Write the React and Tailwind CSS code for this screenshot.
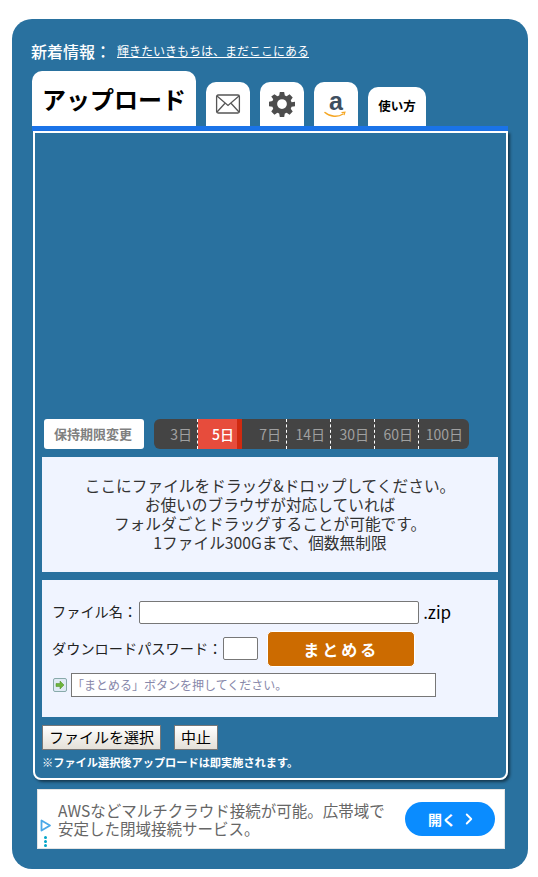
import { ChevronRight } from 'lucide-react';

const days = [
    { label: '3日', w: 'w-[44px]' },
    { label: '5日', w: 'w-[44px]', active: true },
    { label: '7日', w: 'w-[45px]' },
    { label: '14日', w: 'w-[44px]' },
    { label: '30日', w: 'w-[44px]' },
    { label: '60日', w: 'w-[44px]' },
    { label: '100日', w: 'flex-1', last: true },
];

function MailIcon() {
    return (
        <svg width="26" height="20" viewBox="0 0 26 20" fill="none" stroke="#555" strokeWidth="1.3">
            <rect x="1.6" y="1" width="22.8" height="18" rx="1.5" />
            <path d="M2 2l11 9.5L24 2M2 18l8-8.8M24 18l-8-8.8" />
        </svg>
    );
}

function GearIcon() {
    return (
        <svg width="26" height="26" viewBox="0 0 24 24" fill="#4d4d4d">
            <path fillRule="evenodd" d="M10 1h4l.6 3.1 1.7.7L19 3l2.900 2.900-1.800 2.700.7 1.700L24 10v4l-3.200.6-.7 1.700 1.800 2.700L19 21.900l-2.700-1.800-1.700.7L14 24h-4l-.6-3.200-1.700-.7L5 21.900 2.100 19l1.800-2.700-.7-1.700L0 14v-4l3.200-.7.7-1.700L2.100 5 5 2.900l2.700 1.900 1.700-.7zM12 7.500a4.500 4.500 0 1 0 0 9 4.500 4.500 0 0 0 0-9z" />
        </svg>
    );
}

function AmazonIcon() {
    return (
        <div className="relative flex h-[30px] w-[24px] flex-col items-center">
            <span className="text-[25px] leading-[24px] font-bold text-[#3f4f5f] font-['Liberation_Sans',sans-serif]">a</span>
            <svg className="absolute bottom-0 left-0" width="22" height="8" viewBox="0 0 22 8" fill="none">
                <path d="M1 1.500c5 4.500 13 5 18 1.500" stroke="#f5a623" strokeWidth="1.500" strokeLinecap="round" />
                <path d="M17.500 1.500l3.500-.3-1 3" stroke="#f5a623" strokeWidth="1.100" />
            </svg>
        </div>
    );
}

function IconTab({ children }) {
    return (
        <div className="ml-[10px] flex h-[44px] w-[44px] items-center justify-center rounded-t-[10px] bg-white">
            {children}
        </div>
    );
}

function DayPicker() {
    return (
        <div className="ml-[10px] flex h-[30px] w-[315px] overflow-hidden rounded-[6px] bg-[#444444] text-[14px] text-[#a0a0a0]">
            {days.map((d) => {
                let cls = 'border-r border-dashed border-r-white pr-[5px]';
                if (d.last) cls = 'pr-[6px]';
                if (d.active) cls = 'border-r-[5px] border-solid border-r-[#d02a10] bg-[#e74c3c] pr-[3px] font-medium text-white';
                return (
                    <div key={d.label} className={`flex items-center justify-end ${d.w} ${cls}`}>
                        {d.label}
                    </div>
                );
            })}
        </div>
    );
}

function AdBanner() {
    return (
        <div className="ml-[25px] mr-[23px] mt-[9px] flex h-[60px] items-center border border-[#e4e4e4] bg-white">
            <div className="flex w-[20px] flex-col items-start pt-[27px] pl-[2px]">
                <svg width="12" height="13" viewBox="0 0 12 13" fill="none" stroke="#4aa8e8" strokeWidth="1.800" strokeLinejoin="round">
                    <path d="M1.500 1.500v10L10 6.500z" />
                </svg>
                <div className="ml-[4px] mt-[4px] flex flex-col gap-[1px]">
                    <span className="h-[3px] w-[3px] rounded-full bg-[#00a5c8]" />
                    <span className="h-[3px] w-[3px] rounded-full bg-[#00a5c8]" />
                    <span className="h-[3px] w-[3px] rounded-full bg-[#00a5c8]" />
                </div>
            </div>
            <p className="w-[347px] text-[15.5px] leading-[18.5px] text-[#666666]">
                AWSなどマルチクラウド接続が可能。広帯域で
                <br />
                安定した閉域接続サービス。
            </p>
            <div className="flex h-[34px] w-[90px] items-center justify-center rounded-full bg-[#0a8cff] pl-[6px] text-[14px] font-bold text-white">
                開く
                <ChevronRight size={18} strokeWidth={2.500} className="ml-[4px]" />
            </div>
        </div>
    );
}

export default function App() {
    return (
        <div className="h-[877px] bg-white pl-[12px] pr-[10px] pt-[19px] font-['Noto_Sans_CJK_JP','Noto_Sans',sans-serif]">
            <div className="h-[850px] rounded-[20px] bg-[#29719f] pt-[20px]">
                <div className="flex h-[24px] items-center pl-[19px] text-white">
                    <span className="text-[16px] leading-[24px] font-medium">新着情報：</span>
                    <a className="ml-[6px] text-[12px] leading-[16px] underline">輝きたいきもちは、まだここにある</a>
                </div>

                <div className="mt-[8px] flex h-[55px] items-end pl-[20px]">
                    <div className="flex h-[55px] w-[164px] items-center justify-center rounded-t-[10px] bg-white text-[24px] font-bold text-black">
                        アップロード
                    </div>
                    <IconTab><MailIcon /></IconTab>
                    <IconTab><GearIcon /></IconTab>
                    <IconTab><AmazonIcon /></IconTab>
                    <div className="ml-[10px] flex h-[39px] w-[58px] items-center justify-center rounded-t-[10px] bg-white text-[12.5px] font-bold text-black">
                        使い方
                    </div>
                </div>

                <div className="mx-[20px] h-[5px] bg-[#1a73e8]" />

                <div className="ml-[21px] mr-[20px] flex h-[649px] flex-col rounded-b-[8px] border-2 border-white pl-[7px] pr-[8px] pb-[8px] shadow-[2px_2px_3px_rgba(0,0,0,0.5)]">
                    <div className="mt-[286px] flex items-center pl-[2px]">
                        <div className="flex h-[30px] w-[100px] items-center justify-center rounded-[3px] bg-white pr-[2px] text-[13px] font-bold text-[#808080]">
                            保持期限変更
                        </div>
                        <DayPicker />
                    </div>

                    <div className="mt-[8px] flex h-[115px] flex-col items-center justify-center bg-[#f0f4ff] text-center text-[15.7px] leading-[19px] text-[#333333]">
                        <p>ここにファイルをドラッグ&amp;ドロップしてください。</p>
                        <p>お使いのブラウザが対応していれば</p>
                        <p>フォルダごとドラッグすることが可能です。</p>
                        <p>1ファイル300Gまで、個数無制限</p>
                    </div>

                    <div className="mt-[8px] h-[138px] bg-[#f0f4ff] px-[10px] pt-[21px] text-[14.2px] text-[#222222]">
                        <div className="flex h-[23px] items-center">
                            <span>ファイル名：</span>
                            <div className="ml-[2px] h-[23px] w-[280px] rounded-[2px] border border-[#777777] bg-white" />
                            <span className="ml-[4px] text-[17px] text-black">.zip</span>
                        </div>
                        <div className="mt-[7px] flex h-[36px] items-center">
                            <span>ダウンロードパスワード：</span>
                            <div className="ml-[1px] h-[23px] w-[35px] rounded-[2px] border border-[#777777] bg-white" />
                            <button className="ml-[9px] h-[36px] w-[148px] rounded-[5px] border border-white bg-[#cc6b00] text-[16px] font-bold tracking-[3px] text-white">
                                まとめる
                            </button>
                        </div>
                        <div className="mt-[6px] flex h-[24px] items-center">
                            <div className="ml-[1px] flex h-[14px] w-[14px] items-center justify-center rounded-[2px] border border-[#88aaaa] bg-[#dfeaf5]">
                                <svg width="10" height="10" viewBox="0 0 10 10" fill="#6cb43c" stroke="#4a8a20" strokeWidth="0.500">
                                    <path d="M1 3.500h4V1l4 4-4 4V6.500H1z" />
                                </svg>
                            </div>
                            <div className="ml-[4px] flex h-[24px] w-[365px] items-center border border-[#777777] bg-white text-[12px] text-[#8888aa]">
                                「まとめる」ボタンを押してください。
                            </div>
                        </div>
                    </div>

                    <div className="mt-[8px] flex h-[25px] items-center">
                        <button className="h-[25px] w-[119px] border border-[#777777] bg-gradient-to-b from-white to-[#e4e0d8] text-[15px] text-black">
                            ファイルを選択
                        </button>
                        <button className="ml-[13px] h-[25px] w-[44px] border border-[#777777] bg-gradient-to-b from-white to-[#e4e0d8] text-[15px] text-black">
                            中止
                        </button>
                    </div>
                    <p className="mt-[4px] text-[11.2px] leading-[16px] font-bold text-white">※ファイル選択後アップロードは即実施されます。</p>
                </div>

                <AdBanner />
            </div>
        </div>
    );
}
